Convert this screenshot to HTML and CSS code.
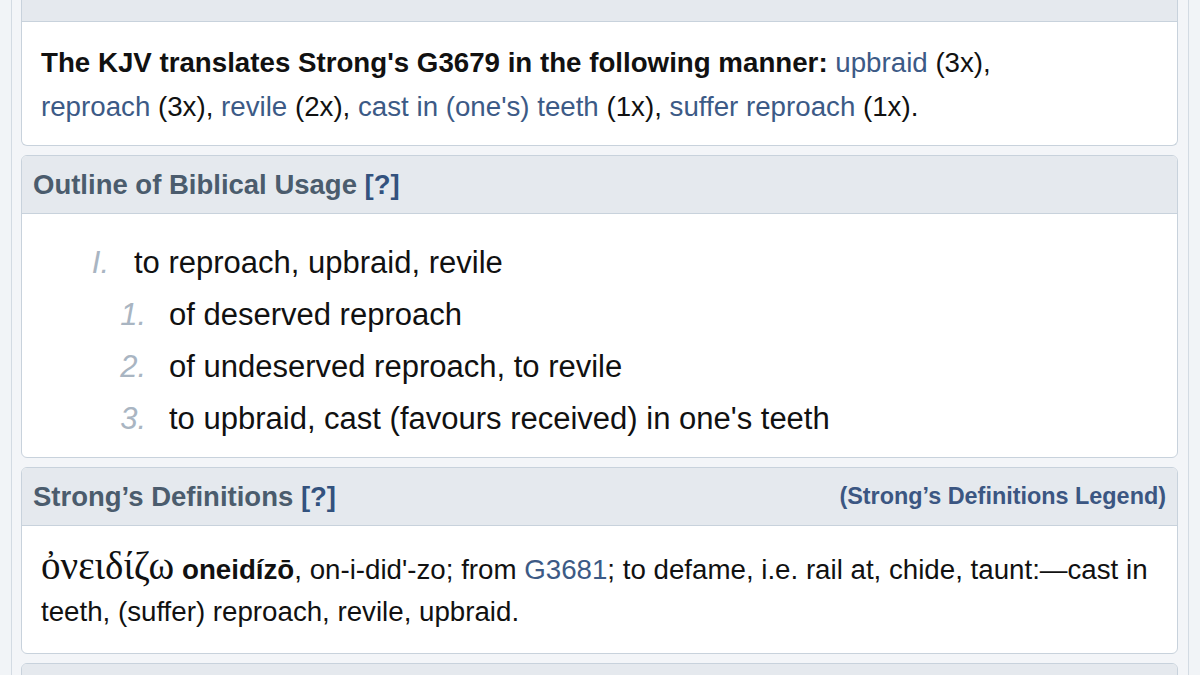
FILE: index.html
```html
<!DOCTYPE html>
<html>
<head>
<meta charset="utf-8">
<link rel="stylesheet" href="styles.css">
</head>
<body>
<div class="wrap">
  <section class="panel first">
    <div class="head cut"></div>
    <div class="body kjv">
      <b>The KJV translates Strong's G3679 in the following manner:</b> <span class="item"><a>upbraid</a> (3x),</span> <span class="item"><a>reproach</a> (3x),</span> <span class="item"><a>revile</a> (2x),</span> <span class="item"><a>cast in (one's) teeth</a> (1x),</span> <span class="item"><a>suffer reproach</a> (1x).</span>
    </div>
  </section>

  <section class="panel">
    <div class="head"><span class="title">Outline of Biblical Usage <a class="q">[?]</a></span></div>
    <div class="body outline">
      <div class="row lvl1"><span class="num">I.</span><span>to reproach, upbraid, revile</span></div>
      <div class="row lvl2"><span class="num">1.</span><span>of deserved reproach</span></div>
      <div class="row lvl2"><span class="num">2.</span><span>of undeserved reproach, to revile</span></div>
      <div class="row lvl2"><span class="num">3.</span><span>to upbraid, cast (favours received) in one's teeth</span></div>
    </div>
  </section>

  <section class="panel">
    <div class="head"><span class="title">Strong’s Definitions <a class="q">[?]</a></span><a class="legend">(Strong’s Definitions Legend)</a></div>
    <div class="body defs">
      <span class="greek">ὀνειδίζω</span> <b>oneidízō</b>, on-i-did'-zo; from <a>G3681</a>; to defame, i.e. rail at, chide, taunt:—cast in teeth, (suffer) reproach, revile, upbraid.
    </div>
  </section>

  <section class="panel">
    <div class="head"></div>
  </section>
</div>
</body>
</html>
```

FILE: styles.css
```css
html, body {
  margin: 0;
  padding: 0;
  background: #f1f4f7;
  height: 675px;
  overflow: hidden;
}
body {
  font-family: "Liberation Sans", Arial, sans-serif;
  color: #111;
}
.wrap {
  margin: 0 11px;
  padding: 0 10px 0 9px;
  border-left: 1px solid #d3dbe3;
  border-right: 1px solid #d3dbe3;
  background: #f3f5f8;
  min-height: 675px;
  display: flex;
  flex-direction: column;
  gap: 9px;
}
.panel {
  border: 1px solid #c8d2dc;
  border-radius: 6px;
  background: #fff;
  overflow: hidden;
  flex-shrink: 0;
}
.panel.first {
  border-top: none;
  border-radius: 0 0 6px 6px;
}
.head {
  height: 57px;
  background: #e5e9ee;
  border-bottom: 1px solid #c8d2dc;
  display: flex;
  align-items: center;
  justify-content: space-between;
  padding: 0 11px;
}
.head.cut {
  height: 21px;
}
.title {
  font-weight: bold;
  font-size: 27.5px;
  color: #4b5c6d;
}
.q {
  color: #33527e;
}
.legend {
  font-weight: bold;
  font-size: 23.4px;
  color: #3b5682;
}
a {
  color: #3c5a86;
  text-decoration: none;
}
.body {
  font-size: 27.7px;
}
.item {
  white-space: nowrap;
}
.kjv {
  padding: 19px 19px 16px;
  line-height: 44px;
}
.outline {
  padding: 23px 19px 12px;
  font-size: 31px;
  line-height: 52px;
}
.row {
  display: flex;
}
.num {
  color: #a9b5c2;
  font-style: italic;
  text-align: right;
}
.lvl1 {
  padding-left: 46px;
}
.lvl1 .num {
  width: 22px;
  margin-right: 25px;
}
.lvl2 .num {
  width: 105px;
  margin-right: 23px;
}
.defs {
  padding: 23px 19px 20px;
  line-height: 42px;
}
.greek {
  font-family: "Liberation Serif", "Times New Roman", serif;
  font-size: 39px;
  line-height: 0;
}
```
